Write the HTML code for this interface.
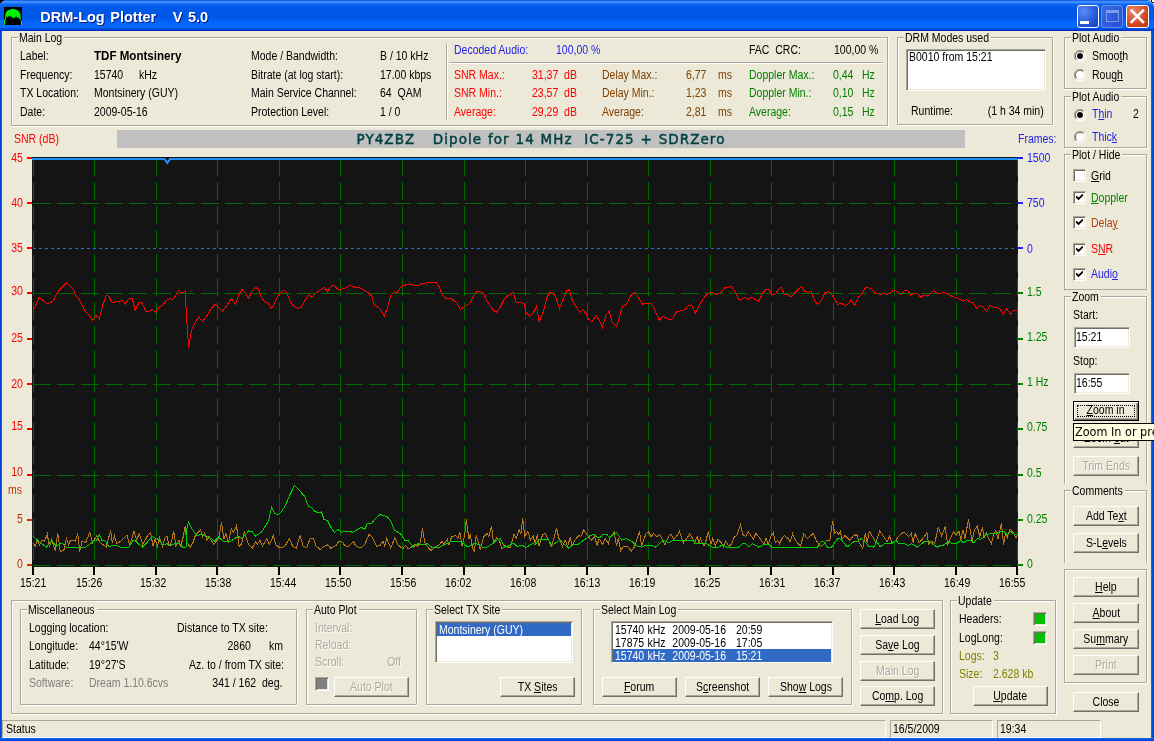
<!DOCTYPE html>
<html lang="en">
<head>
<meta charset="utf-8">
<title>DRM-Log Plotter V 5.0</title>
<style>
html,body{margin:0;padding:0;background:#ECE9D8;}
body{width:1154px;height:741px;overflow:hidden;position:relative;font-family:"Liberation Sans",sans-serif;font-size:12.5px;line-height:14px;color:#000;}
#win{will-change:transform;position:absolute;left:0;top:0;width:1154px;height:741px;background:#ECE9D8;overflow:hidden;}
.t{position:absolute;white-space:pre;font-size:12.5px;line-height:14px;}
.v{position:absolute;white-space:pre;font-family:"DejaVu Sans","Liberation Sans",sans-serif;}
.fr{position:absolute;border:1px solid #ACA899;box-shadow:1px 1px 0 #fff;}
.fr i{position:absolute;left:0;top:0;right:0;bottom:0;border-left:1px solid #fff;border-top:1px solid #fff;}
.btn{position:absolute;box-sizing:border-box;background:#ECE9D8;border:1px solid;border-color:#fff #716F64 #716F64 #fff;box-shadow:inset -1px -1px 0 #ACA899;text-align:center;}
.btn .bl{display:inline-block;transform:scaleX(0.84);white-space:pre;font-size:12.5px;}
.btn.dis{color:#ACA899;}
.btn.dis .bl{text-shadow:1px 1px 0 #fff;}
.btn.def{border:1px solid #000;box-shadow:inset 1px 1px 0 #fff,inset -1px -1px 0 #716F64,inset -2px -2px 0 #ACA899;}
.foc{position:absolute;left:3px;top:3px;right:3px;bottom:3px;border:1px dotted #000;}
.sunk{position:absolute;box-sizing:border-box;border:1px solid;border-color:#ACA899 #fff #fff #ACA899;box-shadow:inset 1px 1px 0 #716F64,inset -1px -1px 0 #ECE9D8;}
u{text-decoration:underline;text-underline-offset:1px;}
#tb{position:absolute;left:0;top:0;width:1154px;height:31px;background:linear-gradient(180deg,#0A4EDC 0px,#3A8CFF 1.5px,#3A8CFF 2.5px,#1068F0 4px,#0059E8 7px,#0056E4 17px,#0360F6 21px,#0468FF 24px,#0468FF 27.5px,#0046DC 29px,#0030C0 31px);border-radius:6px 7px 0 0;}
.cb{position:absolute;top:5px;width:22px;height:23px;box-sizing:border-box;border:1px solid #fff;border-radius:3px;}
</style>
</head>
<body>
<div id="win">
<div style="position:absolute;left:0px;top:31px;width:2px;height:710px;background:linear-gradient(90deg,#0831D9,#0855DD 50%,#166AEE);"></div>
<div style="position:absolute;left:1151px;top:31px;width:3px;height:710px;background:linear-gradient(90deg,#166AEE,#0855DD 50%,#0831D9);"></div>
<div style="position:absolute;left:0px;top:738px;width:1154px;height:3px;background:linear-gradient(180deg,#166AEE,#0855DD 50%,#0831D9);"></div>
<div style="position:absolute;left:1148px;top:0;width:6px;height:6px;background:#FFFEE8"></div><div style="position:absolute;left:1151px;top:0;width:1px;height:3px;background:#000"></div><div style="position:absolute;left:1152px;top:2px;width:2px;height:1px;background:#000"></div>
<div style="position:absolute;left:0;top:0;width:8px;height:8px;background:#2368E8"></div><div style="position:absolute;left:0;top:0;width:4px;height:2px;background:#000"></div><div style="position:absolute;left:0;top:2px;width:2px;height:1px;background:#000"></div>
<div id="tb"></div>
<svg style="position:absolute;left:4px;top:7px" width="18" height="18" viewBox="0 0 18 18"><rect width="18" height="18" fill="#000"/><path d="M0 18V13L1 12L1.4 6.5L3 3.8L6 2.6L9 1.8L12 2.5L14.5 4L16.4 7L17 13L18 14V18H17V14.5L16.5 13L16 11L15 12.6L14.5 10L13.5 11.6L13 9L12 10.6L11.5 9.5L10.5 11L9.6 10.4L9 12.2L8 9.5L7 10.2L6 8.5L5 10.6L4.5 8.5L3.5 10.6L2.6 9L2 12L1.2 13.4L1 18Z" fill="#00F400"/></svg>
<span class="t" style="top:9.19px;color:#fff;font-size:14.5px;line-height:16.24px;font-weight:bold;left:40.3px;transform:scaleX(1.0);transform-origin:0 0;text-shadow:1px 1px 0 #0A1883;word-spacing:1.5px;">DRM-Log Plotter   V 5.0</span>
<div class="cb" style="left:1077px;background:radial-gradient(circle at 30% 25%,#5B8CF5,#2457D8 60%,#1440C0);"><b style="position:absolute;left:2px;top:15px;width:9px;height:3px;background:#fff"></b></div>
<div class="cb" style="left:1101px;background:linear-gradient(135deg,#3A6AE6,#2450D4);border-color:#6A8CE8;"><b style="position:absolute;left:4px;top:4px;width:13px;height:12px;border:1px solid #7D9AE8;border-top-width:3px;box-sizing:border-box"></b></div>
<div class="cb" style="left:1126px;width:23px;background:radial-gradient(circle at 30% 25%,#E9866A,#D4471F 60%,#B8310C);"><svg width="21" height="21" viewBox="0 0 21 21" style="position:absolute;left:0;top:0"><path d="M4.5 4.5L16 16M16 4.5L4.5 16" stroke="#fff" stroke-width="2.6" stroke-linecap="square"/></svg></div>
<div class="fr" style="left:11px;top:37px;width:875px;height:87px"><i></i></div>
<div style="position:absolute;left:18px;top:36px;width:46px;height:4px;background:#ECE9D8;"></div>
<span class="t" style="top:30.70px;color:#000;left:19.3px;transform:scaleX(0.84);transform-origin:0 0;">Main Log</span>
<span class="t" style="top:48.70px;color:#000;left:19.8px;transform:scaleX(0.84);transform-origin:0 0;">Label:</span>
<span class="t" style="top:67.70px;color:#000;left:19.8px;transform:scaleX(0.84);transform-origin:0 0;">Frequency:</span>
<span class="t" style="top:86.00px;color:#000;left:19.8px;transform:scaleX(0.84);transform-origin:0 0;">TX Location:</span>
<span class="t" style="top:104.70px;color:#000;left:19.8px;transform:scaleX(0.84);transform-origin:0 0;">Date:</span>
<span class="t" style="top:48.70px;color:#000;font-weight:bold;left:94.3px;transform:scaleX(0.925);transform-origin:0 0;">TDF Montsinery</span>
<span class="t" style="top:67.70px;color:#000;left:94.3px;transform:scaleX(0.84);transform-origin:0 0;">15740</span>
<span class="t" style="top:67.70px;color:#000;left:139.3px;transform:scaleX(0.84);transform-origin:0 0;">kHz</span>
<span class="t" style="top:86.00px;color:#000;left:94.3px;transform:scaleX(0.84);transform-origin:0 0;">Montsinery (GUY)</span>
<span class="t" style="top:104.70px;color:#000;left:94.3px;transform:scaleX(0.84);transform-origin:0 0;">2009-05-16</span>
<span class="t" style="top:48.70px;color:#000;left:250.8px;transform:scaleX(0.84);transform-origin:0 0;">Mode / Bandwidth:</span>
<span class="t" style="top:67.70px;color:#000;left:250.8px;transform:scaleX(0.84);transform-origin:0 0;">Bitrate (at log start):</span>
<span class="t" style="top:86.00px;color:#000;left:250.8px;transform:scaleX(0.84);transform-origin:0 0;">Main Service Channel:</span>
<span class="t" style="top:104.70px;color:#000;left:250.8px;transform:scaleX(0.84);transform-origin:0 0;">Protection Level:</span>
<span class="t" style="top:48.70px;color:#000;left:380.3px;transform:scaleX(0.84);transform-origin:0 0;">B / 10 kHz</span>
<span class="t" style="top:67.70px;color:#000;left:380.3px;transform:scaleX(0.84);transform-origin:0 0;">17.00 kbps</span>
<span class="t" style="top:86.00px;color:#000;left:380.3px;transform:scaleX(0.84);transform-origin:0 0;">64  QAM</span>
<span class="t" style="top:104.70px;color:#000;left:380.3px;transform:scaleX(0.84);transform-origin:0 0;">1 / 0</span>
<div style="position:absolute;left:446px;top:43px;width:1px;height:77px;background:#ACA899;"></div>
<div style="position:absolute;left:447px;top:43px;width:1px;height:77px;background:#fff;"></div>
<div style="position:absolute;left:449px;top:62px;width:434px;height:1px;background:#ACA899;"></div>
<div style="position:absolute;left:449px;top:63px;width:434px;height:1px;background:#fff;"></div>
<span class="t" style="top:42.70px;color:#2222E6;left:453.8px;transform:scaleX(0.84);transform-origin:0 0;">Decoded Audio:</span>
<span class="t" style="top:42.70px;color:#2222E6;left:555.8px;transform:scaleX(0.84);transform-origin:0 0;">100,00 %</span>
<span class="t" style="top:67.70px;color:#FF0000;left:453.8px;transform:scaleX(0.84);transform-origin:0 0;">SNR Max.:</span>
<span class="t" style="top:67.70px;color:#FF0000;left:531.8px;transform:scaleX(0.84);transform-origin:0 0;">31,37  dB</span>
<span class="t" style="top:86.00px;color:#FF0000;left:453.8px;transform:scaleX(0.84);transform-origin:0 0;">SNR Min.:</span>
<span class="t" style="top:86.00px;color:#FF0000;left:531.8px;transform:scaleX(0.84);transform-origin:0 0;">23,57  dB</span>
<span class="t" style="top:104.70px;color:#FF0000;left:453.8px;transform:scaleX(0.84);transform-origin:0 0;">Average:</span>
<span class="t" style="top:104.70px;color:#FF0000;left:531.8px;transform:scaleX(0.84);transform-origin:0 0;">29,29  dB</span>
<span class="t" style="top:67.70px;color:#804000;left:601.8px;transform:scaleX(0.84);transform-origin:0 0;">Delay Max.:</span>
<span class="t" style="top:67.70px;color:#804000;left:685.8px;transform:scaleX(0.84);transform-origin:0 0;">6,77</span>
<span class="t" style="top:67.70px;color:#804000;left:718.3px;transform:scaleX(0.84);transform-origin:0 0;">ms</span>
<span class="t" style="top:86.00px;color:#804000;left:601.8px;transform:scaleX(0.84);transform-origin:0 0;">Delay Min.:</span>
<span class="t" style="top:86.00px;color:#804000;left:685.8px;transform:scaleX(0.84);transform-origin:0 0;">1,23</span>
<span class="t" style="top:86.00px;color:#804000;left:718.3px;transform:scaleX(0.84);transform-origin:0 0;">ms</span>
<span class="t" style="top:104.70px;color:#804000;left:601.8px;transform:scaleX(0.84);transform-origin:0 0;">Average:</span>
<span class="t" style="top:104.70px;color:#804000;left:685.8px;transform:scaleX(0.84);transform-origin:0 0;">2,81</span>
<span class="t" style="top:104.70px;color:#804000;left:718.3px;transform:scaleX(0.84);transform-origin:0 0;">ms</span>
<span class="t" style="top:42.70px;color:#000;left:748.8px;transform:scaleX(0.84);transform-origin:0 0;">FAC  CRC:</span>
<span class="t" style="top:42.70px;color:#000;left:834.3px;transform:scaleX(0.84);transform-origin:0 0;">100,00 %</span>
<span class="t" style="top:67.70px;color:#008000;left:748.8px;transform:scaleX(0.84);transform-origin:0 0;">Doppler Max.:</span>
<span class="t" style="top:67.70px;color:#008000;left:832.8px;transform:scaleX(0.84);transform-origin:0 0;">0,44</span>
<span class="t" style="top:67.70px;color:#008000;left:861.8px;transform:scaleX(0.84);transform-origin:0 0;">Hz</span>
<span class="t" style="top:86.00px;color:#008000;left:748.8px;transform:scaleX(0.84);transform-origin:0 0;">Doppler Min.:</span>
<span class="t" style="top:86.00px;color:#008000;left:832.8px;transform:scaleX(0.84);transform-origin:0 0;">0,10</span>
<span class="t" style="top:86.00px;color:#008000;left:861.8px;transform:scaleX(0.84);transform-origin:0 0;">Hz</span>
<span class="t" style="top:104.70px;color:#008000;left:748.8px;transform:scaleX(0.84);transform-origin:0 0;">Average:</span>
<span class="t" style="top:104.70px;color:#008000;left:832.8px;transform:scaleX(0.84);transform-origin:0 0;">0,15</span>
<span class="t" style="top:104.70px;color:#008000;left:861.8px;transform:scaleX(0.84);transform-origin:0 0;">Hz</span>
<div class="fr" style="left:897px;top:37px;width:154px;height:86px"><i></i></div>
<div style="position:absolute;left:904px;top:36px;width:87px;height:4px;background:#ECE9D8;"></div>
<span class="t" style="top:30.70px;color:#000;left:905.3px;transform:scaleX(0.84);transform-origin:0 0;">DRM Modes used</span>
<div class="sunk" style="left:906px;top:49px;width:140px;height:42px;background:#fff"></div>
<span class="t" style="top:50.40px;color:#000;left:909.3px;transform:scaleX(0.84);transform-origin:0 0;">B0010 from 15:21</span>
<span class="t" style="top:104.40px;color:#000;left:910.8px;transform:scaleX(0.84);transform-origin:0 0;">Runtime:</span>
<span class="t" style="top:104.40px;color:#000;right:110.5px;transform:scaleX(0.84);transform-origin:100% 0;">(1 h 34 min)</span>
<div style="position:absolute;left:117px;top:130px;width:848px;height:18px;background:#C0C0C0;"></div>
<span class="v" style="left:117px;width:848px;top:130px;height:18px;line-height:18px;text-align:center;font-weight:normal;-webkit-text-stroke:0.45px #004040;font-size:13.5px;color:#004040;letter-spacing:1.05px;word-spacing:0.5px">PY4ZBZ   Dipole for 14 MHz  IC-725 + SDRZero</span>
<span class="t" style="top:131.70px;color:#FF0000;left:14.3px;transform:scaleX(0.84);transform-origin:0 0;">SNR (dB)</span>
<span class="t" style="top:131.70px;color:#2222E6;left:1017.8px;transform:scaleX(0.84);transform-origin:0 0;">Frames:</span>
<div class="fr" style="left:1064px;top:37px;width:81px;height:50px"><i></i></div>
<div style="position:absolute;left:1071px;top:36px;width:50px;height:4px;background:#ECE9D8;"></div>
<span class="t" style="top:30.70px;color:#000;left:1072.3px;transform:scaleX(0.84);transform-origin:0 0;">Plot Audio</span>
<svg style="position:absolute;left:1074px;top:50px" width="12" height="12" viewBox="0 0 12 12"><circle cx="6" cy="6" r="4.6" fill="#fff"/><path d="M1.9 10.1A5.6 5.6 0 0 1 10.1 1.9" fill="none" stroke="#A5A192" stroke-width="1"/><path d="M2.7 9.3A4.6 4.6 0 0 1 9.3 2.7" fill="none" stroke="#605E54" stroke-width="1"/><path d="M10.1 1.9A5.6 5.6 0 0 1 1.9 10.1" fill="none" stroke="#fff" stroke-width="1.1"/><path d="M9.3 2.7A4.6 4.6 0 0 1 2.7 9.3" fill="none" stroke="#ECE9D8" stroke-width="1.1"/><circle cx="6" cy="6" r="2.9" fill="#000"/></svg>
<span class="t" style="top:48.50px;color:#000;left:1092.3px;transform:scaleX(0.84);transform-origin:0 0;">Smoo<u>t</u>h</span>
<svg style="position:absolute;left:1074px;top:68.7px" width="12" height="12" viewBox="0 0 12 12"><circle cx="6" cy="6" r="4.6" fill="#fff"/><path d="M1.9 10.1A5.6 5.6 0 0 1 10.1 1.9" fill="none" stroke="#A5A192" stroke-width="1"/><path d="M2.7 9.3A4.6 4.6 0 0 1 9.3 2.7" fill="none" stroke="#605E54" stroke-width="1"/><path d="M10.1 1.9A5.6 5.6 0 0 1 1.9 10.1" fill="none" stroke="#fff" stroke-width="1.1"/><path d="M9.3 2.7A4.6 4.6 0 0 1 2.7 9.3" fill="none" stroke="#ECE9D8" stroke-width="1.1"/></svg>
<span class="t" style="top:67.50px;color:#000;left:1092.3px;transform:scaleX(0.84);transform-origin:0 0;">Roug<u>h</u></span>
<div class="fr" style="left:1064px;top:96px;width:81px;height:50px"><i></i></div>
<div style="position:absolute;left:1071px;top:95px;width:50px;height:4px;background:#ECE9D8;"></div>
<span class="t" style="top:89.70px;color:#000;left:1072.3px;transform:scaleX(0.84);transform-origin:0 0;">Plot Audio</span>
<svg style="position:absolute;left:1074px;top:109px" width="12" height="12" viewBox="0 0 12 12"><circle cx="6" cy="6" r="4.6" fill="#fff"/><path d="M1.9 10.1A5.6 5.6 0 0 1 10.1 1.9" fill="none" stroke="#A5A192" stroke-width="1"/><path d="M2.7 9.3A4.6 4.6 0 0 1 9.3 2.7" fill="none" stroke="#605E54" stroke-width="1"/><path d="M10.1 1.9A5.6 5.6 0 0 1 1.9 10.1" fill="none" stroke="#fff" stroke-width="1.1"/><path d="M9.3 2.7A4.6 4.6 0 0 1 2.7 9.3" fill="none" stroke="#ECE9D8" stroke-width="1.1"/><circle cx="6" cy="6" r="2.9" fill="#000"/></svg>
<span class="t" style="top:107.40px;color:#2222E6;left:1092.3px;transform:scaleX(0.84);transform-origin:0 0;">T<u>h</u>in</span>
<span class="t" style="top:107.40px;color:#000;left:1132.8px;transform:scaleX(0.84);transform-origin:0 0;">2</span>
<svg style="position:absolute;left:1074px;top:130.7px" width="12" height="12" viewBox="0 0 12 12"><circle cx="6" cy="6" r="4.6" fill="#fff"/><path d="M1.9 10.1A5.6 5.6 0 0 1 10.1 1.9" fill="none" stroke="#A5A192" stroke-width="1"/><path d="M2.7 9.3A4.6 4.6 0 0 1 9.3 2.7" fill="none" stroke="#605E54" stroke-width="1"/><path d="M10.1 1.9A5.6 5.6 0 0 1 1.9 10.1" fill="none" stroke="#fff" stroke-width="1.1"/><path d="M9.3 2.7A4.6 4.6 0 0 1 2.7 9.3" fill="none" stroke="#ECE9D8" stroke-width="1.1"/></svg>
<span class="t" style="top:129.70px;color:#2222E6;left:1092.3px;transform:scaleX(0.84);transform-origin:0 0;">Thic<u>k</u></span>
<div class="fr" style="left:1064px;top:154px;width:81px;height:134px"><i></i></div>
<div style="position:absolute;left:1071px;top:153px;width:51px;height:4px;background:#ECE9D8;"></div>
<span class="t" style="top:147.70px;color:#000;left:1072.3px;transform:scaleX(0.84);transform-origin:0 0;">Plot / Hide</span>
<div style="position:absolute;left:1064px;top:290px;width:84px;height:1px;background:#ECE9D8;"></div>
<div class="sunk" style="left:1073px;top:169.2px;width:13px;height:13.0px;background:#fff"></div>
<span class="t" style="top:168.50px;color:#000;left:1091.0px;transform:scaleX(0.84);transform-origin:0 0;"><u>G</u>rid</span>
<div class="sunk" style="left:1073px;top:191.1px;width:13px;height:13.0px;background:#fff"></div>
<svg style="position:absolute;left:1076px;top:194.1px" width="7" height="7" viewBox="0 0 7 7"><path d="M0 2.5L2.5 5L7 0.5" fill="none" stroke="#000" stroke-width="1.8"/></svg>
<span class="t" style="top:190.70px;color:#008000;left:1091.0px;transform:scaleX(0.84);transform-origin:0 0;"><u>D</u>oppler</span>
<div class="sunk" style="left:1073px;top:216.2px;width:13px;height:13.0px;background:#fff"></div>
<svg style="position:absolute;left:1076px;top:219.2px" width="7" height="7" viewBox="0 0 7 7"><path d="M0 2.5L2.5 5L7 0.5" fill="none" stroke="#000" stroke-width="1.8"/></svg>
<span class="t" style="top:215.70px;color:#B04010;left:1091.0px;transform:scaleX(0.84);transform-origin:0 0;">Dela<u>y</u></span>
<div class="sunk" style="left:1073px;top:242.9px;width:13px;height:13.0px;background:#fff"></div>
<svg style="position:absolute;left:1076px;top:245.9px" width="7" height="7" viewBox="0 0 7 7"><path d="M0 2.5L2.5 5L7 0.5" fill="none" stroke="#000" stroke-width="1.8"/></svg>
<span class="t" style="top:242.20px;color:#FF0000;left:1091.0px;transform:scaleX(0.84);transform-origin:0 0;">S<u>N</u>R</span>
<div class="sunk" style="left:1073px;top:267.5px;width:13px;height:13.0px;background:#fff"></div>
<svg style="position:absolute;left:1076px;top:270.5px" width="7" height="7" viewBox="0 0 7 7"><path d="M0 2.5L2.5 5L7 0.5" fill="none" stroke="#000" stroke-width="1.8"/></svg>
<span class="t" style="top:266.70px;color:#2222E6;left:1091.0px;transform:scaleX(0.84);transform-origin:0 0;">Audi<u>o</u></span>
<div class="fr" style="left:1064px;top:296px;width:81px;height:187px"><i></i></div>
<div style="position:absolute;left:1071px;top:295px;width:30px;height:4px;background:#ECE9D8;"></div>
<span class="t" style="top:289.70px;color:#000;left:1072.3px;transform:scaleX(0.84);transform-origin:0 0;">Zoom</span>
<div style="position:absolute;left:1064px;top:484px;width:84px;height:2px;background:#ECE9D8;"></div>
<span class="t" style="top:307.70px;color:#000;left:1072.8px;transform:scaleX(0.84);transform-origin:0 0;">Start:</span>
<div class="sunk" style="left:1074px;top:327px;width:56px;height:21px;background:#fff"></div>
<span class="t" style="top:330.00px;color:#000;left:1076.3px;transform:scaleX(0.84);transform-origin:0 0;">15:21</span>
<span class="t" style="top:354.30px;color:#000;left:1072.8px;transform:scaleX(0.84);transform-origin:0 0;">Stop:</span>
<div class="sunk" style="left:1074px;top:373px;width:56px;height:21px;background:#fff"></div>
<span class="t" style="top:375.70px;color:#000;left:1076.3px;transform:scaleX(0.84);transform-origin:0 0;">16:55</span>
<div class="btn def" style="left:1073px;top:401px;width:66px;height:20px"><span class="bl" style="line-height:16px"><u>Z</u>oom in</span><b class="foc"></b></div>
<div class="btn" style="left:1073px;top:428px;width:66px;height:20px"><span class="bl" style="line-height:18px">Zoom <u>o</u>ut</span></div>
<div class="btn dis" style="left:1073px;top:456px;width:66px;height:20px"><span class="bl" style="line-height:18px">Trim Ends</span></div>
<div class="fr" style="left:1064px;top:490px;width:81px;height:72px"><i></i></div>
<div style="position:absolute;left:1071px;top:489px;width:54px;height:4px;background:#ECE9D8;"></div>
<span class="t" style="top:483.70px;color:#000;left:1072.3px;transform:scaleX(0.84);transform-origin:0 0;">Comments</span>
<div style="position:absolute;left:1064px;top:563px;width:84px;height:2px;background:#ECE9D8;"></div>
<div class="btn" style="left:1073px;top:506px;width:66px;height:20px"><span class="bl" style="line-height:18px">Add Te<u>x</u>t</span></div>
<div class="btn" style="left:1073px;top:533px;width:66px;height:20px"><span class="bl" style="line-height:18px">S-L<u>e</u>vels</span></div>
<div class="fr" style="left:1064px;top:569px;width:81px;height:112px"><i></i></div>
<div class="btn" style="left:1073px;top:577px;width:66px;height:20px"><span class="bl" style="line-height:18px"><u>H</u>elp</span></div>
<div class="btn" style="left:1073px;top:603px;width:66px;height:20px"><span class="bl" style="line-height:18px"><u>A</u>bout</span></div>
<div class="btn" style="left:1073px;top:629px;width:66px;height:20px"><span class="bl" style="line-height:18px">Su<u>m</u>mary</span></div>
<div class="btn dis" style="left:1073px;top:655px;width:66px;height:20px"><span class="bl" style="line-height:18px">Print</span></div>
<div class="btn" style="left:1073px;top:692px;width:66px;height:20px"><span class="bl" style="line-height:18px">Close</span></div>
<svg style="position:absolute;left:0;top:0" width="1154" height="741" viewBox="0 0 1154 741"><rect x="32" y="157" width="986" height="410" fill="#141414"/><line x1="33.5" y1="158" x2="33.5" y2="567" stroke="#006A00" stroke-width="1" stroke-dasharray="18 6" shape-rendering="crispEdges"/><line x1="94.5" y1="158" x2="94.5" y2="567" stroke="#006A00" stroke-width="1" stroke-dasharray="18 6" shape-rendering="crispEdges"/><line x1="156.5" y1="158" x2="156.5" y2="567" stroke="#006A00" stroke-width="1" stroke-dasharray="18 6" shape-rendering="crispEdges"/><line x1="217.5" y1="158" x2="217.5" y2="567" stroke="#006A00" stroke-width="1" stroke-dasharray="18 6" shape-rendering="crispEdges"/><line x1="279.5" y1="158" x2="279.5" y2="567" stroke="#006A00" stroke-width="1" stroke-dasharray="18 6" shape-rendering="crispEdges"/><line x1="340.5" y1="158" x2="340.5" y2="567" stroke="#006A00" stroke-width="1" stroke-dasharray="18 6" shape-rendering="crispEdges"/><line x1="402.5" y1="158" x2="402.5" y2="567" stroke="#006A00" stroke-width="1" stroke-dasharray="18 6" shape-rendering="crispEdges"/><line x1="464.5" y1="158" x2="464.5" y2="567" stroke="#006A00" stroke-width="1" stroke-dasharray="18 6" shape-rendering="crispEdges"/><line x1="525.5" y1="158" x2="525.5" y2="567" stroke="#006A00" stroke-width="1" stroke-dasharray="18 6" shape-rendering="crispEdges"/><line x1="587.5" y1="158" x2="587.5" y2="567" stroke="#006A00" stroke-width="1" stroke-dasharray="18 6" shape-rendering="crispEdges"/><line x1="648.5" y1="158" x2="648.5" y2="567" stroke="#006A00" stroke-width="1" stroke-dasharray="18 6" shape-rendering="crispEdges"/><line x1="710.5" y1="158" x2="710.5" y2="567" stroke="#006A00" stroke-width="1" stroke-dasharray="18 6" shape-rendering="crispEdges"/><line x1="771.5" y1="158" x2="771.5" y2="567" stroke="#006A00" stroke-width="1" stroke-dasharray="18 6" shape-rendering="crispEdges"/><line x1="833.5" y1="158" x2="833.5" y2="567" stroke="#006A00" stroke-width="1" stroke-dasharray="18 6" shape-rendering="crispEdges"/><line x1="894.5" y1="158" x2="894.5" y2="567" stroke="#006A00" stroke-width="1" stroke-dasharray="18 6" shape-rendering="crispEdges"/><line x1="956.5" y1="158" x2="956.5" y2="567" stroke="#006A00" stroke-width="1" stroke-dasharray="18 6" shape-rendering="crispEdges"/><line x1="1017.5" y1="158" x2="1017.5" y2="567" stroke="#006A00" stroke-width="1" stroke-dasharray="18 6" shape-rendering="crispEdges"/><line x1="33" y1="203.5" x2="1018" y2="203.5" stroke="#006A00" stroke-width="1" stroke-dasharray="18 6" shape-rendering="crispEdges"/><line x1="33" y1="293.5" x2="1018" y2="293.5" stroke="#006A00" stroke-width="1" stroke-dasharray="18 6" shape-rendering="crispEdges"/><line x1="33" y1="384.5" x2="1018" y2="384.5" stroke="#006A00" stroke-width="1" stroke-dasharray="18 6" shape-rendering="crispEdges"/><line x1="33" y1="475.5" x2="1018" y2="475.5" stroke="#006A00" stroke-width="1" stroke-dasharray="18 6" shape-rendering="crispEdges"/><line x1="33" y1="565.5" x2="1018" y2="565.5" stroke="#006A00" stroke-width="1" stroke-dasharray="18 6" shape-rendering="crispEdges"/><line x1="33" y1="248.5" x2="1018" y2="248.5" stroke="#1874CD" stroke-width="1" stroke-dasharray="3 3" shape-rendering="crispEdges"/><polyline points="33.1,542.8 35.2,546.3 37.8,539.3 39.5,545.4 42.1,540.2 44.7,541.1 47.3,534.1 49.4,547.1 51.7,539.3 55.1,550.6 57.7,533.3 60.3,551.5 63.8,550.6 66.4,537.6 68.5,544.5 70.7,540.2 75.4,541.1 77.7,533.3 79.7,551.5 82,541.1 85.5,542.8 89.8,532.4 92.4,542.8 96.7,535.9 99.3,541.1 102.8,544.5 106.3,547.1 108.3,539.3 110.6,530.3 112.3,542.8 114.4,535.9 116.7,543.7 121,541.1 127.1,535 129.7,545.4 134,531 136.6,540.2 139.2,533.3 142.7,544.5 147.9,535 150.5,532.4 153.1,546.3 155.1,538.5 157.4,546.3 159.6,537.6 162.6,546.3 164.8,538.5 166.9,535.9 169,546.3 171.2,542.8 173.8,531 175.9,546.3 179,540.2 180.8,546.3 183.4,535.9 185.1,526.3 186.8,542.8 190.3,547.1 192.9,542.8 195.5,535 200.7,529.8 202.4,536.7 204.7,532.4 206.8,540.2 209.4,536.7 213.7,544.5 217.2,540.2 219.3,535.9 221.5,522 223.8,539.3 225.8,533.3 228.4,542.8 231.3,528.9 233.5,532.4 236.5,525.5 239.1,546.3 241.7,543.7 244.3,531.5 248.6,544.5 252.1,548.3 255.5,541.9 257.3,544.5 259.9,540.2 262.5,546.3 266.8,538.5 269.4,544.5 273.4,535.5 275.5,544.5 279.8,548 285,546.3 289.3,538.5 292.8,546.3 296.3,548 300.1,535.5 303.2,546.3 306.7,548 310.1,538.5 313.6,539 316.2,546.3 320.5,549.7 324,546.3 327.8,544.9 330.9,548.3 336.1,545.4 338.7,541.4 341.3,541.1 344.8,545.4 348.2,547.1 353.4,541.4 356,546.3 361.2,548 364.7,544.5 369,534.5 372.5,537.6 376.8,546.3 380.3,545.4 382.9,541.1 384.6,545.9 386.7,538.5 390.7,548 395,537.6 397.6,544.5 402.8,548.9 405.4,545.4 408,548.3 410,548 415.2,544.5 417.8,546.3 420.4,542.8 422.5,528.1 424.7,542.8 427.3,546.3 430.8,550.6 435.1,547.1 438.6,545.4 442.1,541.4 443.8,544.2 447.3,539.3 449,544.9 451.6,536.7 455.9,535.5 457.7,538.5 459.9,532.4 462,546.3 464.6,535.9 466.3,519.4 468.9,539.3 470.3,534.1 472.4,548 474.5,551.1 476.2,535.5 478.5,542.8 480.2,549.7 483.7,536.7 487.1,533.3 488.9,536.7 491.5,525.8 493.5,542.8 496.7,537.6 499.3,540.2 501.9,548.9 505.3,545.4 507.9,548 510.5,547.1 514,534.1 516.1,538.5 519.2,529.8 520.9,534.1 522.7,518.2 524.7,536.7 527.9,531.5 530.5,540.2 533.1,535.9 535.1,543.7 537.4,534.5 539.1,546.3 542.6,534.5 545.2,533.3 547.8,538.5 551.2,546.3 553.8,538.5 556.4,528.1 559,538.5 562.5,546.3 565.1,540.2 567.7,546.3 570.3,536.7 572,546.3 575.5,539.3 579,535.5 580.7,536.7 583.8,529.8 586.8,534.5 591.1,540.2 594.6,536.7 597.2,545.4 598.9,539.3 600,540.2 602.6,544.5 605.2,538.5 608.3,543.7 610.4,536.7 614.2,532.4 616.5,546.3 618.2,538.5 620.8,550.6 623.4,546.3 627.7,546.3 631.2,551.1 633.8,548 637.3,538.5 639.5,531.5 641.6,546.3 644.2,538.5 646.4,533.3 648.5,531.5 651.1,536.7 653.7,533.3 656.3,536.7 659.8,534.5 662.4,540.2 665,544.5 668.5,536.7 671.1,534.1 673.7,539.3 676.3,536.7 679.4,531.5 681.5,537.6 683.5,542.8 686.7,538.5 689.8,533.8 692.7,538.5 694.5,542.8 697.1,536.7 699.1,542.8 700.5,538.5 704,546.3 706.1,540.2 708.3,531.5 710.9,544.5 712.7,538.5 715.3,546.3 717.9,539 721.3,542.8 723.4,547.1 725.6,541.1 729.1,546.3 731.7,543.7 734.3,536.7 736.9,535.5 738.6,530.7 740.4,524.6 743,534.5 745.6,536.7 748.2,531.5 750.8,535.5 753.4,539.3 756,533.3 759.4,537.6 763.8,544.5 766,538.5 768.1,544.5 770.7,536.7 773.3,532.4 775.4,542.8 777.6,540.2 779.4,543.7 782,538.5 784.6,535.5 788,538.5 790,541.9 792.6,533.8 796.1,541.1 800.4,546.3 803.9,533.8 807.3,538.5 813.4,533.3 816,540.2 820.3,546.3 822.9,545.4 826.4,540.2 829.9,540.2 832.5,521.1 834.7,533.3 836.8,531.5 838.5,534.5 840.3,531.5 842,539.3 845.1,535.5 849.8,540.2 853.3,535.9 856.7,534.5 859.3,542.8 862.8,548.3 865.4,533.3 867.1,542.8 869.4,531.5 873.2,537.6 875.8,542.8 879.8,531 883.6,536.7 887.1,541.9 889.7,535.9 892.3,543.7 895.7,540.2 899.2,535.5 904,532 908.7,536.7 911.3,533.3 913.1,542.8 915.1,533.3 919.1,542.8 924.3,536.7 926.9,532.4 928.6,543.7 931.2,541.1 934.7,543.7 938.2,527.2 941.6,535.9 945.1,526.8 947.7,544.5 951.2,536.7 953.8,531.5 956.4,535.5 959,530.7 960.7,540.2 963,529.8 965,538.5 968.5,519.4 972,541.1 974.6,529.8 977.2,526.3 979.8,536.7 982.4,527.2 984,538 986.2,532.3 988.6,538 991.5,543.7 993.4,534.8 995.9,530.7 998,538.8 1001.5,523.4 1003.5,544.5 1005.6,532.3 1007.2,538 1010,529.1 1012.9,532.3 1016.1,538 1017.4,534.8" fill="none" stroke="#B87818" stroke-width="1" shape-rendering="crispEdges"/><polyline points="33.1,535.9 36.9,540.2 40.4,542.8 46.5,547.1 51.7,540.2 56,546.3 59.5,543.7 62.9,543.7 66.4,547.1 85.5,547.1 89.8,544.5 93.3,541.1 96.7,540.2 99.3,534.5 101.9,540.2 105.4,541.1 108.9,547.1 113.2,545 116.7,545.4 120.1,547.1 128.8,547.1 133.1,540.2 135.7,541.1 139.2,544.5 142.7,547.1 152.2,536.7 158.2,539.3 162.6,544.9 166.9,543.7 170.4,545.4 177.3,542.8 182.5,547.1 186,547.1 186.8,528.9 188.6,522 192,528.9 196.7,535.5 201.6,534.5 208.5,536.7 214.6,541.1 218.9,536.7 220,538.5 223.5,541.4 230.4,541.4 238.2,536.2 241.7,538.5 245.1,535 248.6,531 252.1,531.5 255.5,536.2 261.6,532 265.1,526.3 268.5,521.1 271.5,507.3 274.6,513.3 278.1,514.7 281.5,511.6 285,506.4 289.3,496 294.5,485.3 299.7,490.8 304.6,496.3 308.4,506.4 311.9,507.8 314.5,511.2 318.8,513 321.4,511.6 324,519.4 327.5,520.6 331.8,528.9 334.4,532.4 337.9,529.3 341.3,532.4 344.8,531 349.1,531.2 352.6,532.4 356.9,529.8 361.2,527.2 364.7,529.3 367.3,523.7 371.6,523.4 376,517.7 380.3,514.5 383.8,515.9 387.2,516.3 390.7,521.1 394.2,529.8 397.6,532 401.1,534.5 404.6,540.2 408,540.5 413.5,547.1 417.8,543.7 421.3,544.9 427.3,543.7 431.7,547.1 439.5,547.1 444.7,544.5 451.6,541.4 460.3,541.4 468.1,547.1 474.1,543.7 478.5,544.2 482.8,547.6 487.1,547.1 492.3,543.7 496.7,540.2 500.1,538.5 504.5,547.1 507.9,546.3 513.6,543.1 516.6,546.3 522.7,545.4 526.1,547.6 532.2,543.7 535.6,544.2 539.1,539 547.8,539 552.1,545.4 557.3,541.9 560.8,540.2 564.2,544.5 568.6,548 573.8,544.5 578.1,544.2 585,539.3 590.2,535.5 593.7,534.5 598,537.9 600,537.6 602.6,534.5 606.9,534.5 609.5,537.9 616.5,532.4 621.7,540.2 626,538.5 632.1,541.4 636.4,545.9 641.6,547.1 645.9,545.4 652,545.4 655.5,547.1 663.3,540.2 668.5,542.8 673.7,540.2 692.7,540.2 695.3,543.1 705.7,543.1 712.7,547.6 718.7,547.1 723.1,544.5 726.5,547.1 738.6,547.1 742.1,543.7 745.6,543.7 749,547.1 752.5,543.7 758.6,547.1 763.8,544.5 769,544.5 771.6,547.1 788.9,547.1 790,547.1 817.7,547.1 821.2,541.4 823.8,541.4 827.3,547.1 831.6,547.1 837.7,538.5 841.1,539.3 847.2,547.1 854.1,541.4 857.6,541.1 861.1,538.5 864.5,541.4 868.9,546.3 874.1,547.1 876.7,541.1 880.1,547.1 884.5,543.7 892.3,543.1 895.7,540.2 898.3,543.1 903.5,543.1 907.9,545.4 911.3,543.7 917.4,547.1 924.3,541.4 928.6,541.4 937.3,547.1 940.8,545.4 944.2,544.9 948.6,541.4 951.2,543.1 957.2,543.1 960.7,540.2 963.3,542.8 967.6,540.2 970.2,540.2 973.7,542.8 977.2,538.5 980.6,539.3 984.5,535.6 988.6,534 992.6,533.2 995.9,534 1000.7,531.2 1004,531.5 1007.2,534.8 1010.4,531.5 1013.7,534 1017.4,534.8" fill="none" stroke="#00D000" stroke-width="1" shape-rendering="crispEdges"/><polyline points="33.1,311.6 39,297.4 42.1,299.8 46.5,303.4 49.9,302.9 53.4,300.8 56.9,292.9 66.4,283 70.2,285.9 73.3,289.4 75.9,296 79.4,299.5 82,304.7 85.5,311.6 88.9,314.7 92.4,320.3 96.2,315.4 99.3,319.4 102.8,304.7 106.3,295.6 108.9,296.3 112.3,302.9 115.8,301.5 119.3,302.1 122.7,300.3 125.3,304.1 129.1,298.6 132.3,298.6 135.2,310.2 139.2,302.1 142.3,303.3 145.8,311.2 149.6,311.2 152.2,309.5 155.6,312.1 159.1,306.9 162.6,305.2 166.9,300.3 169.5,298.6 172.5,299.5 175.2,296.3 178.2,290.5 181.6,292.9 185.1,291.7 186.8,320.3 188.6,348 191.5,329.8 194.6,323.7 198.5,317.1 202.4,321.5 206.8,315.9 212,307.3 215.4,304.3 222.4,311.6 226.1,306.4 231.3,298.6 235.6,304.3 239.1,294.3 241.7,289.4 244.3,291.1 248.6,298.6 252.1,290.8 255.5,287.3 258.5,289.4 261.6,297.7 265.1,302.1 267.7,302.6 271.5,308.5 275.5,301.2 279.8,292.9 284.1,290.5 286.7,292.5 290.2,301.2 293.7,306.4 298,308.5 301.1,307.3 304.9,300.8 308.4,294.3 311.9,297.4 316.2,292.9 320.5,289.9 324.5,287.3 327.5,291.7 331.8,285.6 334.7,285.9 337.9,289.4 341.3,289.4 346.5,287.3 350.8,285.3 355.2,287.3 359.5,287.7 363.8,289.9 369,293.4 371.6,296 374.2,304.7 380.3,309 384.3,316.4 387.2,308.1 390.7,295.6 394.2,291.7 397.1,292.9 401.1,286.5 406.3,284.7 410,284.4 416.9,285.6 423,283.5 429.9,282.5 436,282.5 438.6,285.6 442.9,296 446.4,298.6 449.9,298.2 453.3,299.8 456.8,302.9 460.3,309.5 464.6,306.4 469.8,303.8 473.3,296 476.7,291.7 480.2,291.7 483.7,293.4 487.1,301.2 491.5,308.1 496.3,312.5 500.1,307.3 504.5,298.6 508.8,295.1 513.1,292.2 516.1,302.1 520.9,302.4 524,303.8 526.1,312.5 529.6,316.4 533.1,313.3 536.5,306.4 539.1,321.6 543.4,311.6 546.9,297.7 549.5,292.5 553,292.9 556.4,298.6 559.6,308.5 563.4,298.6 566.8,290.8 569.4,289.6 572,299.5 576.4,307.3 579.5,312.1 582.4,309.5 585.9,313.3 588.5,319 592,321.5 596.3,315.4 600,322 602.4,327.5 606.1,315.1 609.2,311.2 612.1,322 616.5,326.3 619.1,318.5 622.2,307.3 626,304.7 631.2,295.1 635,292.2 638.5,297.7 642.5,304.3 645.9,303.3 650.3,303.3 653.4,306.4 656.3,313.3 659.4,320.3 662.7,316.4 665.9,317.7 669.3,319.7 672.4,319 676.3,312.1 680.6,310.7 684.9,309.9 688.4,305.5 691.9,305.5 695.3,313.3 699.7,304.7 704,297.7 708.3,293.4 711.8,292.2 716.1,294.8 721.3,292.2 725.1,287.3 729.1,287 731.2,286.1 734.3,290.5 738.6,299.5 741.2,299.5 745.1,297.4 748.5,299.1 752,297.2 755.1,299.5 758.6,301.5 762.9,292.5 765.9,289.4 769,289.4 771.6,294.8 775,294.3 778.5,289.4 781.1,287.3 784.1,293.9 788,295.1 790,296.3 792.1,296 796.9,290.5 801.6,286.5 804.7,291.7 808.2,292.2 811.1,291.7 814.3,299.8 817.4,304.7 821.2,300.8 824.7,292.9 827.3,291.7 830.7,292.5 834.2,298.6 837.7,304.3 841.1,303.3 845.1,305.5 848.1,303.8 851.5,299.8 854.6,305.5 858.5,296.9 861.9,294.6 864.9,288.2 867.6,287.3 870.6,288.7 874.9,292.5 880.1,294.3 884.5,293.4 887.1,294.3 890.5,292.5 894,289.9 897.5,291.7 900.6,294.3 904.4,290.5 907.9,290.8 910.8,295.1 914.8,293.4 917.7,293.4 920.8,297.7 924.3,294.6 927.4,296.3 933.5,290.5 937.3,293.4 940.8,293.4 943.9,292.2 947.7,294.6 952.9,296.5 957.2,298.1 963.3,301.2 966.8,299.8 970.2,302.1 973.2,302.6 976.3,308.1 980.6,305.5 983.2,307.3 986.7,311.6 989.9,305.5 992.9,307.1 997.2,307.4 1000.2,309.1 1003.3,314.3 1006.6,308.6 1010.3,314.3 1013.6,310.3 1016.9,310.7" fill="none" stroke="#FF0000" stroke-width="1" shape-rendering="crispEdges"/><polyline points="32,159 164.5,159 167.3,163 170,159 1018,159" fill="none" stroke="#1E90FF" stroke-width="2" stroke-linejoin="miter"/><rect x="27" y="157" width="5" height="2" fill="#FF0000"/><rect x="27" y="202" width="5" height="2" fill="#FF0000"/><rect x="27" y="247" width="5" height="2" fill="#FF0000"/><rect x="27" y="292" width="5" height="2" fill="#FF0000"/><rect x="27" y="338" width="5" height="2" fill="#FF0000"/><rect x="27" y="383" width="5" height="2" fill="#FF0000"/><rect x="27" y="428" width="5" height="2" fill="#FF0000"/><rect x="27" y="474" width="5" height="2" fill="#FF0000"/><rect x="27" y="519" width="5" height="2" fill="#D03000"/><rect x="27" y="564" width="5" height="2" fill="#D03000"/><rect x="1017" y="157" width="6" height="2" fill="#2020FF"/><rect x="1017" y="202" width="6" height="2" fill="#2020FF"/><rect x="1017" y="247" width="6" height="2" fill="#2020FF"/><rect x="1017" y="292" width="6" height="2" fill="#008000"/><rect x="1017" y="338" width="6" height="2" fill="#008000"/><rect x="1017" y="383" width="6" height="2" fill="#008000"/><rect x="1017" y="428" width="6" height="2" fill="#008000"/><rect x="1017" y="474" width="6" height="2" fill="#008000"/><rect x="1017" y="519" width="6" height="2" fill="#008000"/><rect x="1017" y="564" width="6" height="2" fill="#008000"/><rect x="32" y="566" width="2" height="9" fill="#000"/><rect x="93" y="566" width="2" height="9" fill="#000"/><rect x="155" y="566" width="2" height="9" fill="#000"/><rect x="216" y="566" width="2" height="9" fill="#000"/><rect x="278" y="566" width="2" height="9" fill="#000"/><rect x="339" y="566" width="2" height="9" fill="#000"/><rect x="401" y="566" width="2" height="9" fill="#000"/><rect x="463" y="566" width="2" height="9" fill="#000"/><rect x="524" y="566" width="2" height="9" fill="#000"/><rect x="586" y="566" width="2" height="9" fill="#000"/><rect x="647" y="566" width="2" height="9" fill="#000"/><rect x="709" y="566" width="2" height="9" fill="#000"/><rect x="770" y="566" width="2" height="9" fill="#000"/><rect x="832" y="566" width="2" height="9" fill="#000"/><rect x="893" y="566" width="2" height="9" fill="#000"/><rect x="955" y="566" width="2" height="9" fill="#000"/><rect x="1016" y="566" width="2" height="9" fill="#000"/></svg>
<span class="t" style="top:150.70px;color:#FF0000;right:1131.2px;transform:scaleX(0.84);transform-origin:100% 0;">45</span>
<span class="t" style="top:196.20px;color:#FF0000;right:1131.2px;transform:scaleX(0.84);transform-origin:100% 0;">40</span>
<span class="t" style="top:240.70px;color:#FF0000;right:1131.2px;transform:scaleX(0.84);transform-origin:100% 0;">35</span>
<span class="t" style="top:283.70px;color:#FF0000;right:1131.2px;transform:scaleX(0.84);transform-origin:100% 0;">30</span>
<span class="t" style="top:331.40px;color:#FF0000;right:1131.2px;transform:scaleX(0.84);transform-origin:100% 0;">25</span>
<span class="t" style="top:376.90px;color:#FF0000;right:1131.2px;transform:scaleX(0.84);transform-origin:100% 0;">20</span>
<span class="t" style="top:418.90px;color:#FF0000;right:1131.2px;transform:scaleX(0.84);transform-origin:100% 0;">15</span>
<span class="t" style="top:465.10px;color:#E01000;right:1131.2px;transform:scaleX(0.84);transform-origin:100% 0;">10</span>
<span class="t" style="top:512.40px;color:#C03000;right:1131.2px;transform:scaleX(0.84);transform-origin:100% 0;">5</span>
<span class="t" style="top:557.20px;color:#C03000;right:1131.2px;transform:scaleX(0.84);transform-origin:100% 0;">0</span>
<span class="t" style="top:482.70px;color:#C03000;left:8.3px;transform:scaleX(0.84);transform-origin:0 0;">ms</span>
<span class="t" style="top:150.70px;color:#2020FF;left:1027.0px;transform:scaleX(0.84);transform-origin:0 0;">1500</span>
<span class="t" style="top:196.20px;color:#2020FF;left:1027.0px;transform:scaleX(0.84);transform-origin:0 0;">750</span>
<span class="t" style="top:242.10px;color:#2020FF;left:1027.0px;transform:scaleX(0.84);transform-origin:0 0;">0</span>
<span class="t" style="top:284.70px;color:#008000;left:1027.0px;transform:scaleX(0.84);transform-origin:0 0;">1.5</span>
<span class="t" style="top:330.00px;color:#008000;left:1027.0px;transform:scaleX(0.84);transform-origin:0 0;">1.25</span>
<span class="t" style="top:375.00px;color:#008000;left:1027.0px;transform:scaleX(0.84);transform-origin:0 0;">1 Hz</span>
<span class="t" style="top:419.70px;color:#008000;left:1027.0px;transform:scaleX(0.84);transform-origin:0 0;">0.75</span>
<span class="t" style="top:466.20px;color:#008000;left:1027.0px;transform:scaleX(0.84);transform-origin:0 0;">0.5</span>
<span class="t" style="top:512.40px;color:#008000;left:1027.0px;transform:scaleX(0.84);transform-origin:0 0;">0.25</span>
<span class="t" style="top:557.20px;color:#008000;left:1027.0px;transform:scaleX(0.84);transform-origin:0 0;">0</span>
<span class="t" style="top:575.70px;color:#000;left:19.9px;transform:scaleX(0.84);transform-origin:0 0;">15:21</span>
<span class="t" style="top:575.70px;color:#000;left:75.9px;transform:scaleX(0.84);transform-origin:0 0;">15:26</span>
<span class="t" style="top:575.70px;color:#000;left:140.0px;transform:scaleX(0.84);transform-origin:0 0;">15:32</span>
<span class="t" style="top:575.70px;color:#000;left:204.8px;transform:scaleX(0.84);transform-origin:0 0;">15:38</span>
<span class="t" style="top:575.70px;color:#000;left:269.9px;transform:scaleX(0.84);transform-origin:0 0;">15:44</span>
<span class="t" style="top:575.70px;color:#000;left:324.6px;transform:scaleX(0.84);transform-origin:0 0;">15:50</span>
<span class="t" style="top:575.70px;color:#000;left:389.7px;transform:scaleX(0.84);transform-origin:0 0;">15:56</span>
<span class="t" style="top:575.70px;color:#000;left:444.8px;transform:scaleX(0.84);transform-origin:0 0;">16:02</span>
<span class="t" style="top:575.70px;color:#000;left:509.6px;transform:scaleX(0.84);transform-origin:0 0;">16:08</span>
<span class="t" style="top:575.70px;color:#000;left:574.0px;transform:scaleX(0.84);transform-origin:0 0;">16:13</span>
<span class="t" style="top:575.70px;color:#000;left:629.2px;transform:scaleX(0.84);transform-origin:0 0;">16:19</span>
<span class="t" style="top:575.70px;color:#000;left:693.9px;transform:scaleX(0.84);transform-origin:0 0;">16:25</span>
<span class="t" style="top:575.70px;color:#000;left:758.5px;transform:scaleX(0.84);transform-origin:0 0;">16:31</span>
<span class="t" style="top:575.70px;color:#000;left:813.9px;transform:scaleX(0.84);transform-origin:0 0;">16:37</span>
<span class="t" style="top:575.70px;color:#000;left:879.1px;transform:scaleX(0.84);transform-origin:0 0;">16:43</span>
<span class="t" style="top:575.70px;color:#000;left:944.0px;transform:scaleX(0.84);transform-origin:0 0;">16:49</span>
<span class="t" style="top:575.70px;color:#000;left:999.1px;transform:scaleX(0.84);transform-origin:0 0;">16:55</span>
<div class="fr" style="left:11px;top:600px;width:930px;height:112px"><i></i></div>
<div class="fr" style="left:20px;top:609px;width:275px;height:94px"><i></i></div>
<div style="position:absolute;left:27px;top:608px;width:70px;height:4px;background:#ECE9D8;"></div>
<span class="t" style="top:602.70px;color:#000;left:28.3px;transform:scaleX(0.84);transform-origin:0 0;">Miscellaneous</span>
<span class="t" style="top:620.70px;color:#000;left:28.8px;transform:scaleX(0.84);transform-origin:0 0;">Logging location:</span>
<span class="t" style="top:620.70px;color:#000;left:176.8px;transform:scaleX(0.84);transform-origin:0 0;">Distance to TX site:</span>
<span class="t" style="top:639.30px;color:#000;left:28.8px;transform:scaleX(0.84);transform-origin:0 0;">Longitude:</span>
<span class="t" style="top:639.30px;color:#000;left:88.8px;transform:scaleX(0.84);transform-origin:0 0;">44°15'W</span>
<span class="t" style="top:639.30px;color:#000;right:903.0px;transform:scaleX(0.84);transform-origin:100% 0;">2860</span>
<span class="t" style="top:639.30px;color:#000;left:268.8px;transform:scaleX(0.84);transform-origin:0 0;">km</span>
<span class="t" style="top:657.70px;color:#000;left:28.8px;transform:scaleX(0.84);transform-origin:0 0;">Latitude:</span>
<span class="t" style="top:657.70px;color:#000;left:88.8px;transform:scaleX(0.84);transform-origin:0 0;">19°27'S</span>
<span class="t" style="top:657.70px;color:#000;right:870.0px;transform:scaleX(0.84);transform-origin:100% 0;">Az. to / from TX site:</span>
<span class="t" style="top:676.40px;color:#808080;left:28.8px;transform:scaleX(0.84);transform-origin:0 0;">Software:</span>
<span class="t" style="top:676.40px;color:#808080;left:88.8px;transform:scaleX(0.84);transform-origin:0 0;">Dream 1.10.6cvs</span>
<span class="t" style="top:676.40px;color:#000;right:872.0px;transform:scaleX(0.84);transform-origin:100% 0;">341 / 162  deg.</span>
<div class="fr" style="left:306px;top:609px;width:109px;height:94px"><i></i></div>
<div style="position:absolute;left:313px;top:608px;width:46px;height:4px;background:#ECE9D8;"></div>
<span class="t" style="top:602.70px;color:#000;left:314.3px;transform:scaleX(0.84);transform-origin:0 0;">Auto Plot</span>
<span class="t" style="top:620.70px;color:#ACA899;left:314.8px;transform:scaleX(0.84);transform-origin:0 0;text-shadow:1px 1px 0 #fff;">Interval:</span>
<span class="t" style="top:638.10px;color:#ACA899;left:314.8px;transform:scaleX(0.84);transform-origin:0 0;text-shadow:1px 1px 0 #fff;">Reload:</span>
<span class="t" style="top:654.90px;color:#ACA899;left:314.8px;transform:scaleX(0.84);transform-origin:0 0;text-shadow:1px 1px 0 #fff;">Scroll:</span>
<span class="t" style="top:654.90px;color:#ACA899;left:387.3px;transform:scaleX(0.84);transform-origin:0 0;text-shadow:1px 1px 0 #fff;">Off</span>
<div class="sunk" style="left:315px;top:677px;width:14px;height:14px;background:#808080"></div>
<div class="btn dis" style="left:334px;top:677px;width:75px;height:20px"><span class="bl" style="line-height:18px">Auto Plot</span></div>
<div class="fr" style="left:426px;top:609px;width:154px;height:94px"><i></i></div>
<div style="position:absolute;left:433px;top:608px;width:69px;height:4px;background:#ECE9D8;"></div>
<span class="t" style="top:602.70px;color:#000;left:434.3px;transform:scaleX(0.84);transform-origin:0 0;">Select TX Site</span>
<div class="sunk" style="left:435px;top:621px;width:138px;height:42px;background:#fff"></div>
<div style="position:absolute;left:437px;top:623px;width:134px;height:13px;background:#316AC5;"></div>
<span class="t" style="top:622.70px;color:#fff;left:438.8px;transform:scaleX(0.84);transform-origin:0 0;">Montsinery (GUY)</span>
<div class="btn" style="left:500px;top:677px;width:75px;height:20px"><span class="bl" style="line-height:18px">TX <u>S</u>ites</span></div>
<div class="fr" style="left:593px;top:609px;width:257px;height:94px"><i></i></div>
<div style="position:absolute;left:600px;top:608px;width:78px;height:4px;background:#ECE9D8;"></div>
<span class="t" style="top:602.70px;color:#000;left:601.3px;transform:scaleX(0.84);transform-origin:0 0;">Select Main Log</span>
<div class="sunk" style="left:611px;top:621px;width:222px;height:42px;background:#fff"></div>
<div style="position:absolute;left:613px;top:649px;width:218px;height:13px;background:#316AC5;"></div>
<span class="t" style="top:622.70px;color:#000;left:614.8px;transform:scaleX(0.84);transform-origin:0 0;word-spacing:0.5px;">15740 kHz  2009-05-16   20:59</span>
<span class="t" style="top:635.70px;color:#000;left:614.8px;transform:scaleX(0.84);transform-origin:0 0;word-spacing:0.5px;">17875 kHz  2009-05-16   17:05</span>
<span class="t" style="top:648.70px;color:#fff;left:614.8px;transform:scaleX(0.84);transform-origin:0 0;word-spacing:0.5px;">15740 kHz  2009-05-16   15:21</span>
<div class="btn" style="left:602px;top:677px;width:75px;height:20px"><span class="bl" style="line-height:18px"><u>F</u>orum</span></div>
<div class="btn" style="left:685px;top:677px;width:75px;height:20px"><span class="bl" style="line-height:18px">S<u>c</u>reenshot</span></div>
<div class="btn" style="left:768px;top:677px;width:75px;height:20px"><span class="bl" style="line-height:18px">Sho<u>w</u> Logs</span></div>
<div class="btn" style="left:860px;top:609px;width:75px;height:20px"><span class="bl" style="line-height:18px"><u>L</u>oad Log</span></div>
<div class="btn" style="left:860px;top:635px;width:75px;height:20px"><span class="bl" style="line-height:18px">Sa<u>v</u>e Log</span></div>
<div class="btn dis" style="left:860px;top:661px;width:75px;height:20px"><span class="bl" style="line-height:18px">Main Log</span></div>
<div class="btn" style="left:860px;top:686px;width:75px;height:20px"><span class="bl" style="line-height:18px">Co<u>m</u>p. Log</span></div>
<div class="fr" style="left:950px;top:600px;width:104px;height:112px"><i></i></div>
<div style="position:absolute;left:957px;top:599px;width:37px;height:4px;background:#ECE9D8;"></div>
<span class="t" style="top:593.70px;color:#000;left:958.3px;transform:scaleX(0.84);transform-origin:0 0;">Update</span>
<span class="t" style="top:611.50px;color:#000;left:958.8px;transform:scaleX(0.84);transform-origin:0 0;">Headers:</span>
<span class="t" style="top:630.50px;color:#000;left:958.8px;transform:scaleX(0.84);transform-origin:0 0;">LogLong:</span>
<div class="sunk" style="left:1033px;top:612px;width:14px;height:14px;background:#00C000"></div>
<div class="sunk" style="left:1033px;top:631px;width:14px;height:14px;background:#00C000"></div>
<span class="t" style="top:648.50px;color:#808000;left:958.8px;transform:scaleX(0.84);transform-origin:0 0;">Logs:</span>
<span class="t" style="top:648.50px;color:#808000;left:992.8px;transform:scaleX(0.84);transform-origin:0 0;">3</span>
<span class="t" style="top:667.30px;color:#808000;left:958.8px;transform:scaleX(0.84);transform-origin:0 0;">Size:</span>
<span class="t" style="top:667.30px;color:#808000;left:992.8px;transform:scaleX(0.84);transform-origin:0 0;">2.628 kb</span>
<div class="btn" style="left:973px;top:686px;width:75px;height:20px"><span class="bl" style="line-height:18px"><u>U</u>pdate</span></div>
<div style="position:absolute;left:2px;top:720px;width:884px;height:18px;box-sizing:border-box;border:1px solid;border-color:#ACA899 #fff #fff #ACA899;"></div>
<div style="position:absolute;left:890px;top:720px;width:103px;height:18px;box-sizing:border-box;border:1px solid;border-color:#ACA899 #fff #fff #ACA899;"></div>
<div style="position:absolute;left:997px;top:720px;width:104px;height:18px;box-sizing:border-box;border:1px solid;border-color:#ACA899 #fff #fff #ACA899;"></div>
<span class="t" style="top:721.70px;color:#000;left:6.3px;transform:scaleX(0.84);transform-origin:0 0;">Status</span>
<span class="t" style="top:721.70px;color:#000;left:893.3px;transform:scaleX(0.84);transform-origin:0 0;">16/5/2009</span>
<span class="t" style="top:721.70px;color:#000;left:1000.3px;transform:scaleX(0.84);transform-origin:0 0;">19:34</span><div style="position:absolute;left:1073px;top:423px;width:90px;height:18px;box-sizing:border-box;background:#FFFFE1;border:1px solid #000;"></div><span class="v" style="left:1075px;top:424px;font-size:12.5px;line-height:16px;color:#000;transform:scaleX(0.9);transform-origin:0 0">Zoom In or pre</span>
</div>
</body>
</html>
